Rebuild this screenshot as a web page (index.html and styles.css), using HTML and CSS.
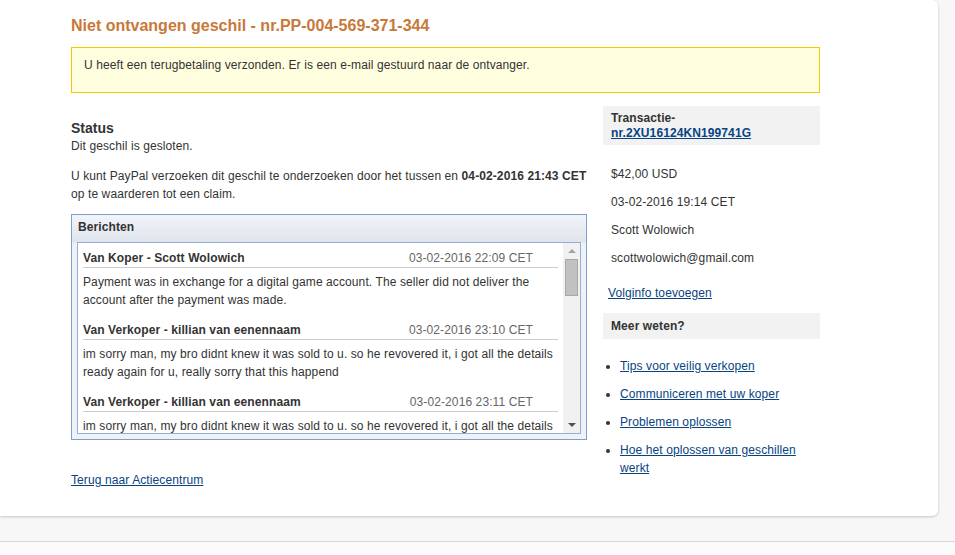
FILE: index.html
```html
<!DOCTYPE html>
<html>
<head>
    <meta name="viewport" content="width=device-width, initial-scale=1.0">
    <link rel="stylesheet" href="styles.css">
</head>
<body>
    <div class="page">
        <div class="card">
            <h1>Niet ontvangen geschil - nr.PP-004-569-371-344</h1>

            <div class="notice">U heeft een terugbetaling verzonden. Er is een e-mail gestuurd naar de ontvanger.</div>

            <div class="columns">
                <div class="main">
                    <h2>Status</h2>
                    <p class="closed">Dit geschil is gesloten.</p>
                    <p class="info">U kunt PayPal verzoeken dit geschil te onderzoeken door het tussen en <b>04-02-2016 21:43 CET</b> op te waarderen tot een claim.</p>

                    <div class="messages">
                        <div class="messages-title">Berichten</div>
                        <div class="messages-inner">
                            <div class="message-list">
                                <div class="message">
                                    <div class="message-head">
                                        <span class="from">Van Koper - Scott Wolowich</span>
                                        <span class="date">03-02-2016 22:09 CET</span>
                                    </div>
                                    <p>Payment was in exchange for a digital game account. The seller did not deliver the account after the payment was made.</p>
                                </div>
                                <div class="message">
                                    <div class="message-head">
                                        <span class="from">Van Verkoper - killian van eenennaam</span>
                                        <span class="date">03-02-2016 23:10 CET</span>
                                    </div>
                                    <p>im sorry man, my bro didnt knew it was sold to u. so he revovered it, i got all the details ready again for u, really sorry that this happend</p>
                                </div>
                                <div class="message">
                                    <div class="message-head">
                                        <span class="from">Van Verkoper - killian van eenennaam</span>
                                        <span class="date">03-02-2016 23:11 CET</span>
                                    </div>
                                    <p>im sorry man, my bro didnt knew it was sold to u. so he revovered it, i got all the details ready again for u, really sorry that this happend</p>
                                </div>
                            </div>
                            <!-- scrollbar drawn by hand, headless hides the real one -->
                            <div class="scrollbar" aria-hidden="true">
                                <span class="arrow up"></span>
                                <span class="thumb"></span>
                                <span class="arrow down"></span>
                            </div>
                        </div>
                    </div>

                    <a href="#" class="back">Terug naar Actiecentrum</a>
                </div>

                <div class="sidebar">
                    <div class="side-box">
                        Transactie-<br>
                        <a href="#">nr.2XU16124KN199741G</a>
                    </div>
                    <div class="details">
                        <p>$42,00 USD</p>
                        <p>03-02-2016 19:14 CET</p>
                        <p>Scott Wolowich</p>
                        <p>scottwolowich@gmail.com</p>
                    </div>
                    <a href="#" class="track">Volginfo toevoegen</a>

                    <div class="side-box more">Meer weten?</div>
                    <ul class="links">
                        <li><a href="#">Tips voor veilig verkopen</a></li>
                        <li><a href="#">Communiceren met uw koper</a></li>
                        <li><a href="#">Problemen oplossen</a></li>
                        <li><a href="#">Hoe het oplossen van geschillen werkt</a></li>
                    </ul>
                </div>
            </div>
        </div>
    </div>
    <div class="footer"></div>
</body>
</html>
```

FILE: styles.css
```css
/* Basic page setup */
body {
    font-family: Arial, "Liberation Sans", sans-serif;
    font-size: 12px;
    letter-spacing: 0.1px;
    color: #333;
    background: #fbfbfb;
    margin: 0;
}

p {
    margin: 0;
}

a {
    color: #084482;
}

.page {
    background: #f7f7f7;
    height: 541px;
    border-bottom: 1px solid #d9d9d9;
    overflow: hidden;
}

/* White card */
.card {
    width: 867px;
    height: 500px;
    padding: 16px 0 0 71px;
    background: white;
    border-radius: 0 6px 6px 0;
    box-shadow: 0 1px 3px #0003;
}

h1 {
    color: #c8793a;
    font-size: 16px;
    line-height: 20px;
    letter-spacing: 0;
    margin: 0;
}

.notice {
    width: 723px;
    margin-top: 11px;
    padding: 8px 12px 18px;
    line-height: 18px;
    background: #ffffe0;
    border: 1px solid #f5c800;
}

/* Two columns */
.columns {
    display: flex;
    gap: 16px;
    margin-top: 13px;
}

.main {
    width: 516px;
    padding-top: 14px;
}

h2 {
    font-size: 14px;
    line-height: 16px;
    letter-spacing: 0;
    margin: 0;
}

.closed {
    line-height: 16px;
    margin-top: 2px;
}

.info {
    line-height: 18px;
    margin-top: 13px;
}

/* Messages box */
.messages {
    margin-top: 11px;
    border: 1px solid #7e9fca;
    padding: 0 5px 5px;
    background: linear-gradient(#f2f4f8, #dfe4ec 27px, #eef1f6 28px);
}

.messages-title {
    font-weight: bold;
    line-height: 18px;
    padding: 3px 1px 6px;
}

.messages-inner {
    display: flex;
    height: 190px;
    border: 1px solid #93afd6;
    background: white;
}

.message-list {
    flex: 1;
    overflow: hidden;
    padding: 6px 5px 0;
}

.message {
    margin-bottom: 12px;
}

.message-head {
    display: flex;
    justify-content: space-between;
    line-height: 18px;
    padding-right: 25px;
    border-bottom: 1px solid #ccc;
}

.from {
    font-weight: bold;
}

.date {
    color: #666;
}

.message p {
    line-height: 18px;
    margin-top: 5px;
}

.scrollbar {
    width: 17px;
    background: #f1f1f1;
    display: flex;
    flex-direction: column;
    align-items: center;
}

.arrow {
    width: 0;
    height: 0;
    border-left: 4px solid transparent;
    border-right: 4px solid transparent;
}

.arrow.up {
    margin-top: 6px;
    border-bottom: 4px solid #a3a3a3;
}

.arrow.down {
    margin-top: auto;
    margin-bottom: 6px;
    border-top: 4px solid #505050;
}

.thumb {
    width: 13px;
    height: 37px;
    margin-top: 6px;
    background: #c1c1c1;
    border: 1px solid #a8a8a8;
    box-sizing: border-box;
}

.back {
    display: inline-block;
    margin-top: 31px;
    line-height: 18px;
}

/* Sidebar */
.sidebar {
    width: 217px;
}

.side-box {
    background: #f2f2f2;
    font-weight: bold;
    line-height: 15px;
    padding: 5px 8px 4px;
}

.details {
    padding: 10px 8px 0;
}

.details p {
    line-height: 18px;
    margin-top: 10px;
}

.track {
    display: inline-block;
    margin: 17px 0 0 5px;
    line-height: 18px;
}

.more {
    margin-top: 11px;
    padding: 6px 8px 5px;
}

.links {
    margin: 18px 0 0;
    padding: 0 0 0 17px;
    width: 185px;
}

.links li {
    line-height: 18px;
    margin-bottom: 10px;
}

.footer {
    height: 13px;
}
```
